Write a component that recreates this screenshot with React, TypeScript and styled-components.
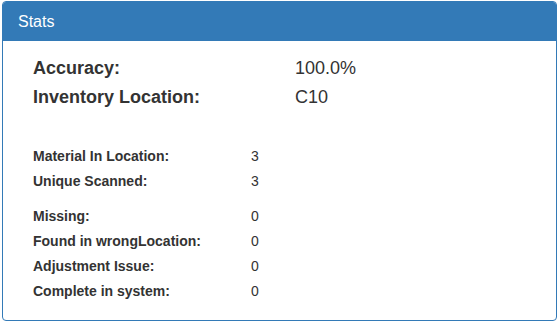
import React from "react";
import styled, { createGlobalStyle } from "styled-components";

const Global = createGlobalStyle`
  html, body { margin: 0; padding: 0; background: #fff; }
  body { font-family: "Liberation Sans", Arial, Helvetica, sans-serif; color: #333; }
`;

const Page = styled.div`
  padding: 1px 2px 0 2px;
  width: 555px;
`;

const Panel = styled.div`
  border: 1px solid #337ab7;
  border-radius: 4px;
  background: #fff;
  overflow: hidden;
`;

const Heading = styled.div`
  background: #337ab7;
  color: #fff;
  padding: 10px 15px;
  height: 19px;
  font-size: 16px;
  line-height: 19px;
`;

const Body = styled.div`
  padding: 13px 0 17px 30px;
  display: flex;
  flex-direction: column;
`;

const Grid = styled.div<{ $valueCol: number; $row: number; $size: number; $mb?: number }>`
  display: grid;
  grid-template-columns: ${(p) => p.$valueCol}px auto;
  grid-auto-rows: ${(p) => p.$row}px;
  align-items: center;
  font-size: ${(p) => p.$size}px;
  margin-bottom: ${(p) => p.$mb ?? 0}px;
`;

const Label = styled.span`
  font-weight: bold;
`;

const Value = styled.span``;

const big = [
  ["Accuracy:", "100.0%"],
  ["Inventory Location:", "C10"],
];
const counts = [
  ["Material In Location:", "3"],
  ["Unique Scanned:", "3"],
];
const issues = [
  ["Missing:", "0"],
  ["Found in wrongLocation:", "0"],
  ["Adjustment Issue:", "0"],
  ["Complete in system:", "0"],
];

export default function App() {
  return (
    <Page>
      <Global />
      <Panel>
        <Heading>Stats</Heading>
        <Body>
          <Grid $valueCol={262} $row={29} $size={18} $mb={31}>
            {big.map(([l, v]) => (
              <React.Fragment key={l}>
                <Label>{l}</Label>
                <Value>{v}</Value>
              </React.Fragment>
            ))}
          </Grid>
          <Grid $valueCol={218} $row={25.5} $size={14} $mb={9}>
            {counts.map(([l, v]) => (
              <React.Fragment key={l}>
                <Label>{l}</Label>
                <Value>{v}</Value>
              </React.Fragment>
            ))}
          </Grid>
          <Grid $valueCol={218} $row={25} $size={14}>
            {issues.map(([l, v]) => (
              <React.Fragment key={l}>
                <Label>{l}</Label>
                <Value>{v}</Value>
              </React.Fragment>
            ))}
          </Grid>
        </Body>
      </Panel>
    </Page>
  );
}
